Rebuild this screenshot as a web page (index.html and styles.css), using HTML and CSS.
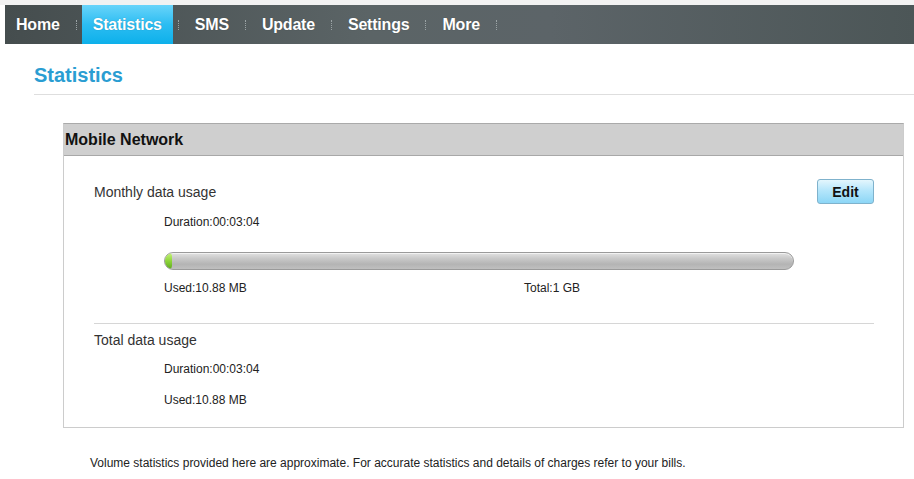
FILE: index.html
```html
<!DOCTYPE html>
<html>
<head>
<meta charset="utf-8">
<title>Statistics</title>
<link rel="stylesheet" href="styles.css">
</head>
<body>
<div class="topstrip"></div>
<nav class="nav">
  <a class="nav-item">Home</a><span class="sep"></span>
  <a class="nav-item active">Statistics</a><span class="sep"></span>
  <a class="nav-item">SMS</a><span class="sep"></span>
  <a class="nav-item">Update</a><span class="sep"></span>
  <a class="nav-item">Settings</a><span class="sep"></span>
  <a class="nav-item">More</a><span class="sep"></span>
</nav>
<h1 class="page-title">Statistics</h1>
<section class="panel">
  <div class="panel-head">Mobile Network</div>
  <div class="panel-body">
    <div class="group">
      <div class="group-head">
        <span class="group-title">Monthly data usage</span>
        <button class="btn">Edit</button>
      </div>
      <div class="detail first">Duration:00:03:04</div>
      <div class="bar"><div class="bar-fill" style="width:1.1%"></div></div>
      <div class="bar-labels"><span class="used">Used:10.88 MB</span><span class="total">Total:1 GB</span></div>
    </div>
    <div class="group second">
      <div class="group-title">Total data usage</div>
      <div class="detail first2">Duration:00:03:04</div>
      <div class="detail last">Used:10.88 MB</div>
    </div>
  </div>
</section>
<p class="note">Volume statistics provided here are approximate. For accurate statistics and details of charges refer to your bills.</p>
</body>
</html>
```
FILE: styles.css
```css
html, body {
  margin: 0;
  padding: 0;
  background: #fff;
  font-family: "Liberation Sans", Arial, sans-serif;
  color: #222;
}
.topstrip {
  height: 5px;
  background: #f2f2f2;
}
.nav {
  display: flex;
  align-items: center;
  height: 39px;
  margin-left: 5px;
  background: linear-gradient(90deg, #454d4e 0%, #5b6466 40%, #5c6468 60%, #4c5657 100%);
}
.nav-item {
  display: flex;
  align-items: center;
  height: 39px;
  padding: 0 11px;
  color: #fff;
  font-weight: bold;
  font-size: 16px;
  letter-spacing: -0.2px;
  text-shadow: 0 0 1px rgba(0,0,0,0.3);
}
.nav-item.active {
  background: linear-gradient(180deg, #69d4fa 0%, #2cbdf2 50%, #0db0ea 100%);
}
.sep {
  width: 0;
  height: 10px;
  margin: 0 5px;
  border-left: 1px dotted #9aa3a5;
}
.page-title {
  margin: 19px 0 0 34px;
  padding-bottom: 7px;
  font-size: 20px;
  line-height: 24px;
  color: #2a9dd2;
  border-bottom: 1px solid #dedede;
}
.panel {
  margin: 28px 10px 0 63px;
  border: 1px solid #cccccc;
  border-top-color: #aaaaaa;
}
.panel-head {
  height: 31px;
  line-height: 31px;
  padding-left: 1px;
  background: #cfcfcf;
  border-bottom: 1px solid #a8a8a8;
  font-weight: bold;
  font-size: 16px;
  color: #111;
}
.panel-body {
  padding: 23px 29px 19px 30px;
}
.group-head {
  display: flex;
  justify-content: space-between;
  align-items: flex-start;
}
.group-head .group-title {
  margin-top: 4px;
}
.group-title {
  font-size: 14px;
  line-height: 18px;
  color: #333;
}
.btn {
  width: 57px;
  height: 25px;
  border: 1px solid #7fb2cc;
  border-radius: 3px;
  background: linear-gradient(180deg, #e4f6fd 0%, #b5e6fb 45%, #8cd6f6 100%);
  font-family: "Liberation Sans", Arial, sans-serif;
  font-weight: bold;
  font-size: 14px;
  color: #111;
  padding: 0;
}
.detail {
  margin-left: 70px;
  font-size: 12px;
  line-height: 16px;
  color: #222;
}
.detail.first {
  margin-top: 10px;
}
.bar {
  margin: 22px 80px 0 70px;
  height: 16px;
  border: 1px solid #9a9a9a;
  border-radius: 9px;
  background: linear-gradient(180deg, #e2e2e2 0%, #c8c8c8 35%, #b4b4b4 70%, #bfbfbf 100%);
  overflow: hidden;
  box-shadow: inset 0 1px 0 #f2f2f2;
}
.bar-fill {
  height: 100%;
  min-width: 7px;
  border-radius: 8px;
  background: linear-gradient(180deg, #c6f27a 0%, #8ed53a 50%, #5faa20 100%);
}
.bar-labels {
  display: flex;
  margin: 10px 0 0 70px;
  font-size: 12px;
  line-height: 16px;
  color: #222;
}
.used {
  width: 360px;
}
.group {
  padding-bottom: 27px;
  border-bottom: 1px solid #d6d6d6;
}
.group.second {
  padding-top: 7px;
  padding-bottom: 0;
  border-bottom: 0;
}
.detail.first2 {
  margin-top: 12px;
}
.detail.last {
  margin-top: 15px;
}
.note {
  margin: 27px 0 0 90px;
  font-size: 12px;
  line-height: 16px;
  color: #222;
}
```
